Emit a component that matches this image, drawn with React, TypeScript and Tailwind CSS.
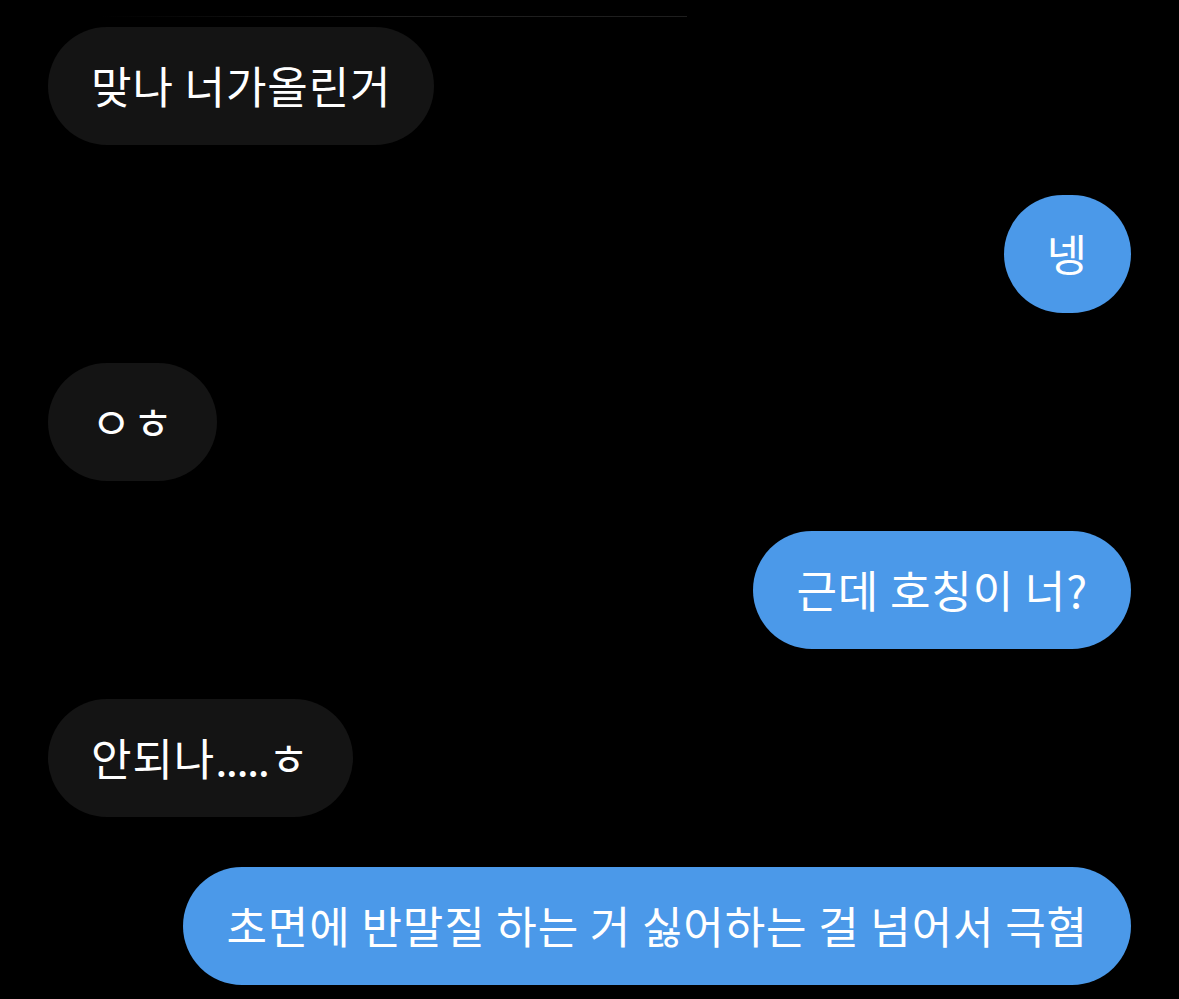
import React from 'react';

type Message = {
  text: string;
  mine: boolean;
};

const messages: Message[] = [
  { text: '맞나 너가올린거', mine: false },
  { text: '넹', mine: true },
  { text: 'ㅇㅎ', mine: false },
  { text: '근데 호칭이 너?', mine: true },
  { text: '안되나.....ㅎ', mine: false },
  { text: '초면에 반말질 하는 거 싫어하는 걸 넘어서 극혐', mine: true },
];

// the iOS font sets runs of periods tighter than Noto does
const renderText = (text: string) =>
  text.split(/(\.{2,})/).map((part, i) =>
    /^\.{2,}$/.test(part) ? (
      <span key={i} className="tracking-[-1.6px]">
        {part}
      </span>
    ) : (
      <React.Fragment key={i}>{part}</React.Fragment>
    )
  );

const Bubble = ({ text, mine }: Message) => (
  <div className={`flex ${mine ? 'justify-end' : 'justify-start'}`}>
    <div
      className={`h-[118px] flex items-center px-[43px] rounded-full text-[44px] tracking-[0.9px] leading-none text-white whitespace-nowrap ${
        mine ? 'bg-[#4b99e9]' : 'bg-[#141414]'
      }`}
    >
      <span className="pb-[2px]">{renderText(text)}</span>
    </div>
  </div>
);

export default function App() {
  return (
    <div
      className="w-[1179px] h-[999px] bg-black overflow-hidden"
      style={{ fontFamily: '"Noto Sans CJK KR", "Noto Sans", sans-serif' }}
    >
      {/* faded divider at the top edge */}
      <div className="pt-[16px] pl-[100px]">
        <div className="h-px w-[587px] bg-gradient-to-r from-transparent via-[#1e1e1e] to-[#1e1e1e]" />
      </div>

      <div className="px-[48px] pt-[10px] flex flex-col gap-[50px]">
        {messages.map((m, i) => (
          <Bubble key={i} text={m.text} mine={m.mine} />
        ))}
      </div>
    </div>
  );
}
